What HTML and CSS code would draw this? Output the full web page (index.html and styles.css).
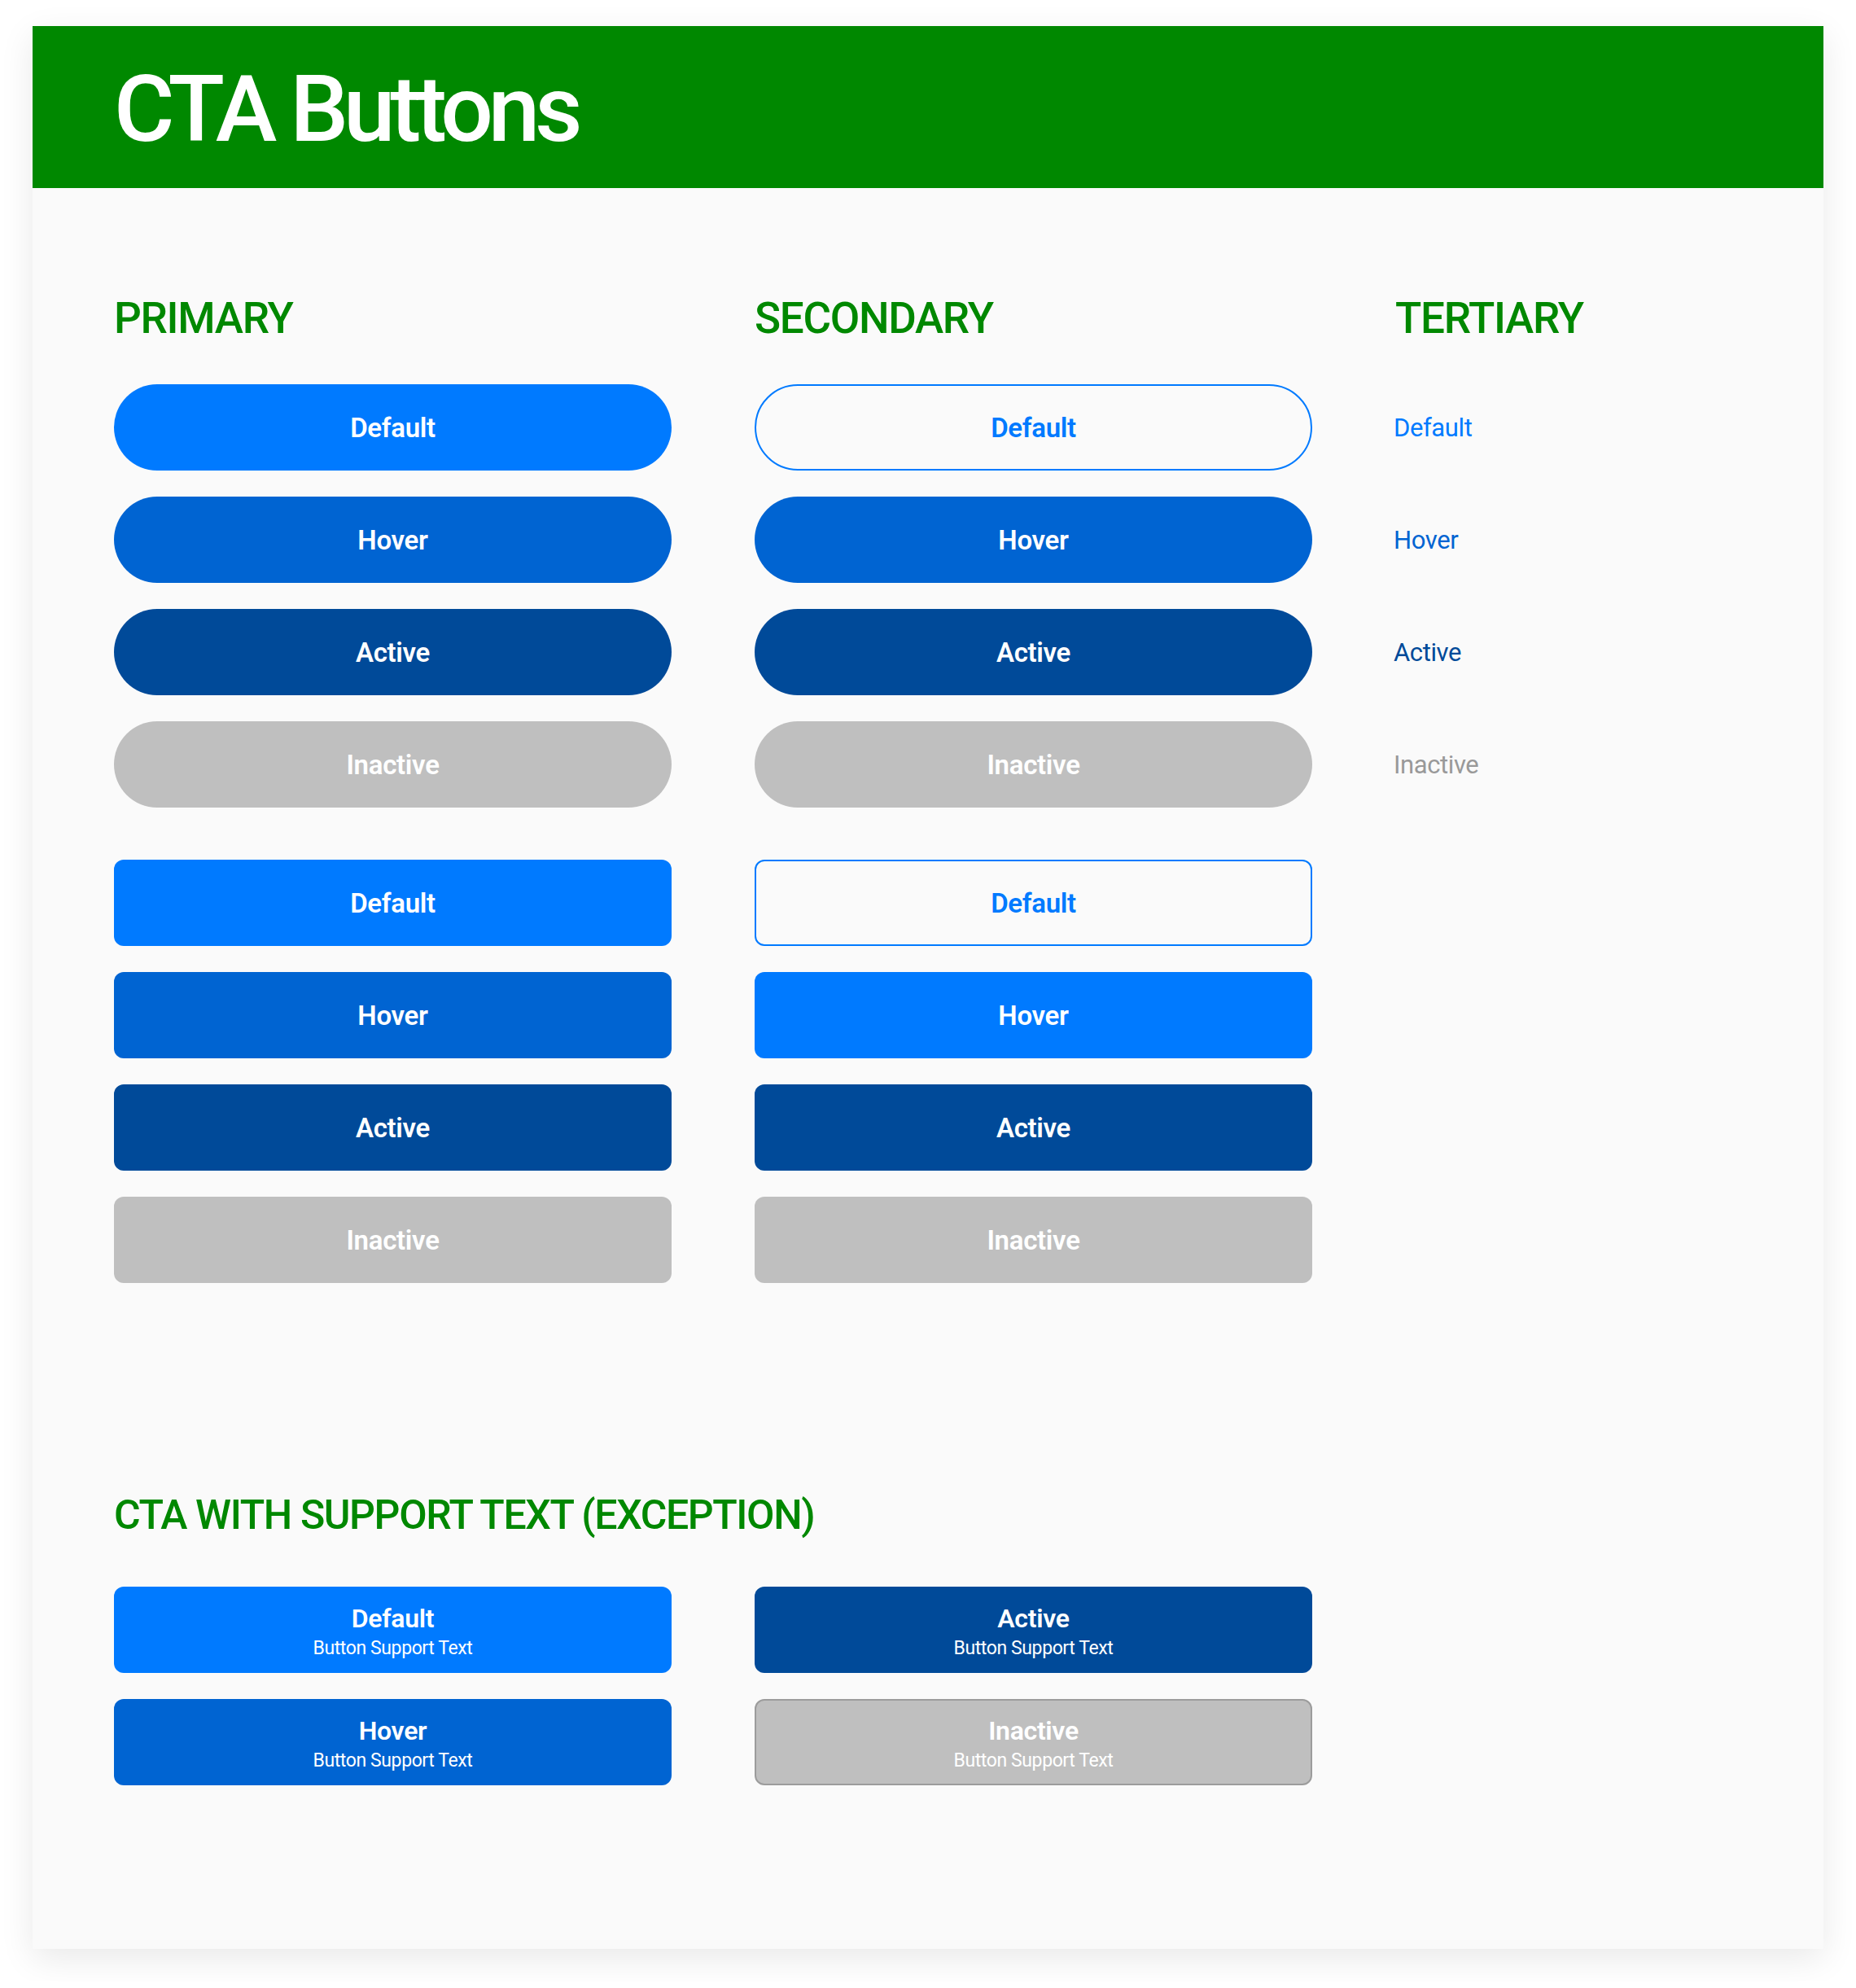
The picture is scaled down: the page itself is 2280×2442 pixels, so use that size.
FILE: index.html
```html
<!DOCTYPE html>
<html lang="en">
<head>
<meta charset="utf-8">
<title>CTA Buttons</title>
<link rel="stylesheet" href="styles.css">
</head>
<body>
<div class="card">
  <header class="header">
    <h1 class="title">CTA Buttons</h1>
  </header>
  <main class="content">
    <section class="grid">
      <div class="col">
        <h2 class="heading">PRIMARY</h2>
        <div class="group">
          <div class="btn pill default">Default</div>
          <div class="btn pill hover">Hover</div>
          <div class="btn pill active">Active</div>
          <div class="btn pill inactive">Inactive</div>
        </div>
        <div class="group">
          <div class="btn rect default">Default</div>
          <div class="btn rect hover">Hover</div>
          <div class="btn rect active">Active</div>
          <div class="btn rect inactive">Inactive</div>
        </div>
      </div>
      <div class="col">
        <h2 class="heading">SECONDARY</h2>
        <div class="group">
          <div class="btn pill outline">Default</div>
          <div class="btn pill hover">Hover</div>
          <div class="btn pill active">Active</div>
          <div class="btn pill inactive">Inactive</div>
        </div>
        <div class="group">
          <div class="btn rect outline">Default</div>
          <div class="btn rect default">Hover</div>
          <div class="btn rect active">Active</div>
          <div class="btn rect inactive">Inactive</div>
        </div>
      </div>
      <div class="col">
        <h2 class="heading">TERTIARY</h2>
        <div class="group">
          <div class="link t-default">Default</div>
          <div class="link t-hover">Hover</div>
          <div class="link t-active">Active</div>
          <div class="link t-inactive">Inactive</div>
        </div>
      </div>
    </section>

    <section class="support">
      <h2 class="heading heading-long">CTA WITH SUPPORT TEXT (EXCEPTION)</h2>
      <div class="support-grid">
        <div class="btn rect two default"><span class="label">Default</span><span class="sub">Button Support Text</span></div>
        <div class="btn rect two active"><span class="label">Active</span><span class="sub">Button Support Text</span></div>
        <div class="btn rect two hover"><span class="label">Hover</span><span class="sub">Button Support Text</span></div>
        <div class="btn rect two inactive bordered"><span class="label">Inactive</span><span class="sub">Button Support Text</span></div>
      </div>
    </section>
  </main>
</div>
</body>
</html>
```

FILE: styles.css
```css
* { box-sizing: border-box; }

html, body {
  margin: 0;
  padding: 0;
  background: #ffffff;
  font-family: Roboto, "Liberation Sans", Arial, sans-serif;
}

body {
  padding: 32px 40px 40px;
  overflow: hidden;
}

.card {
  width: 2200px;
  height: 2362px;
  background: #fafafa;
  box-shadow: 0 12px 40px rgba(0, 0, 0, 0.09);
}

.header {
  height: 199px;
  background: #008800;
  padding: 45px 0 0 100px;
}

.title {
  margin: 0;
  color: #ffffff;
  font-size: 114px;
  line-height: 1;
  font-weight: 500;
  letter-spacing: -6.2px;
}

.content {
  padding: 134px 100px 0;
}

.grid {
  display: grid;
  grid-template-columns: 685px 685px 1fr;
  column-gap: 102px;
}

.col {
  display: flex;
  flex-direction: column;
  gap: 64px;
}

.heading {
  margin: 0 0 -10px;
  color: #008800;
  font-size: 53px;
  line-height: 1;
  font-weight: 500;
  letter-spacing: -1.3px;
}

.heading-long {
  font-size: 50px;
  letter-spacing: -1.4px;
}

.group {
  display: flex;
  flex-direction: column;
  gap: 32px;
}

.btn {
  height: 106px;
  display: flex;
  align-items: center;
  justify-content: center;
  color: #ffffff;
  font-size: 33px;
  font-weight: 600;
  letter-spacing: -0.3px;
}

.pill { border-radius: 53px; }
.rect { border-radius: 12px; }

.default { background: #007aff; }
.hover { background: #0064d2; }
.active { background: #004a99; }
.inactive { background: #bfbfbf; }

.outline {
  background: transparent;
  border: 2px solid #007aff;
  color: #007aff;
}

.bordered {
  border: 2px solid #9c9c9c;
}

.link {
  height: 106px;
  display: flex;
  align-items: center;
  font-size: 31px;
  font-weight: 400;
  letter-spacing: -0.4px;
  margin-left: -2px;
}

.t-default { color: #007aff; }
.t-hover { color: #0064d2; }
.t-active { color: #004a99; }
.t-inactive { color: #999999; }

.support {
  margin-top: 260px;
}

.support .heading {
  margin-bottom: 63px;
}

.support-grid {
  display: grid;
  grid-template-columns: 685px 685px;
  column-gap: 102px;
  row-gap: 32px;
}

.two {
  flex-direction: column;
  gap: 6px;
  padding-top: 6px;
}

.label {
  font-size: 32px;
  line-height: 34px;
  font-weight: 600;
}

.sub {
  font-size: 23px;
  line-height: 28px;
  font-weight: 400;
  letter-spacing: -0.4px;
}
```
